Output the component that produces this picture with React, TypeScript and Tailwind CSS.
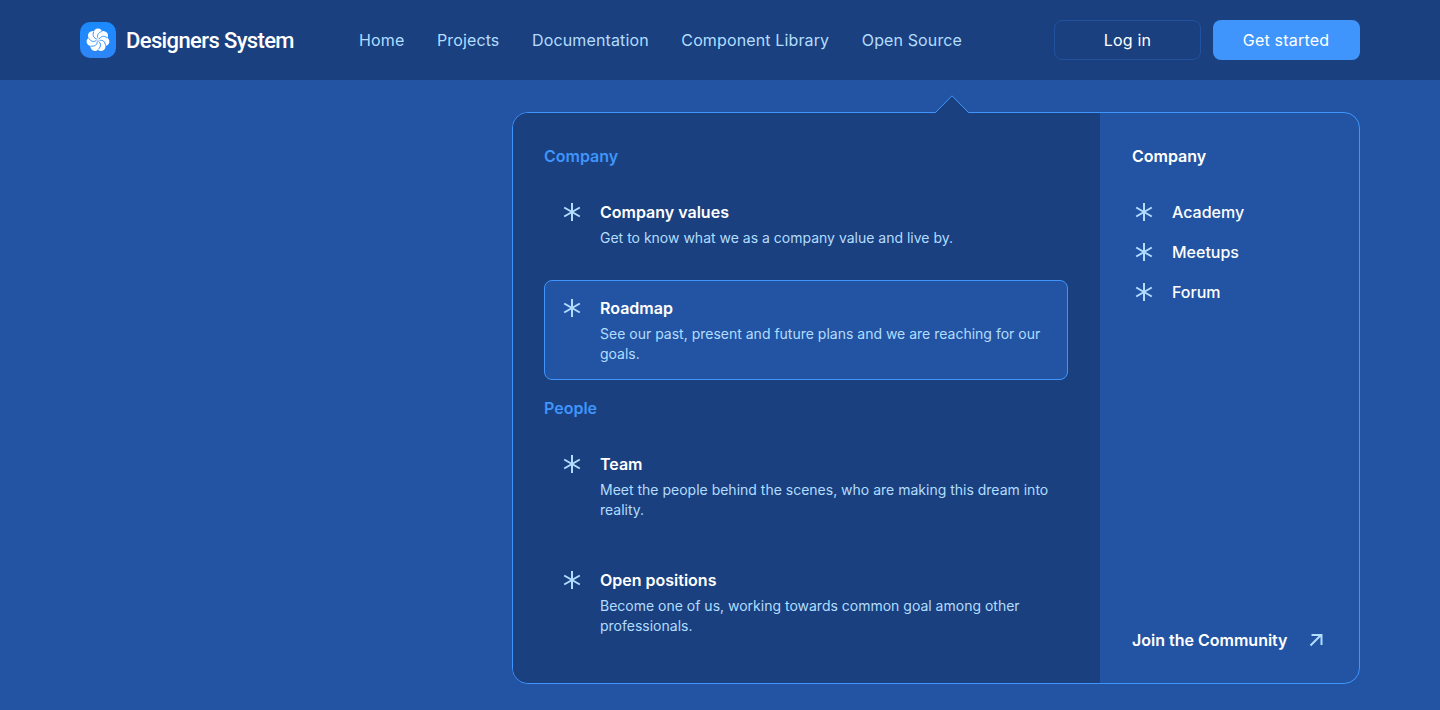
const NAV = ['Home', 'Projects', 'Documentation', 'Component Library', 'Open Source'];

const SECTIONS = [
  {
    title: 'Company',
    items: [
      { title: 'Company values', text: 'Get to know what we as a company value and live by.', active: false },
      { title: 'Roadmap', text: 'See our past, present and future plans and we are reaching for our goals.', active: true },
    ],
  },
  {
    title: 'People',
    items: [
      { title: 'Team', text: 'Meet the people behind the scenes, who are making this dream into reality.', active: false },
      { title: 'Open positions', text: 'Become one of us, working towards common goal among other professionals.', active: false },
    ],
  },
];

const LINKS = ['Academy', 'Meetups', 'Forum'];
const PETALS = [0, 51.43, 102.86, 154.29, 205.71, 257.14, 308.57];

function Asterisk() {
  return (
    <svg className="size-6 shrink-0" viewBox="0 0 24 24" fill="none" stroke="#b2ddff" strokeWidth="2">
      <path d="M12 3v18M4.2 7.5l15.6 9M4.2 16.5l15.6-9" />
    </svg>
  );
}

function Logo() {
  return (
    <svg className="size-9" viewBox="0 0 36 36">
      <defs>
        <linearGradient id="logo" x1="0" y1="0" x2="0" y2="1">
          <stop offset="0" stopColor="#1a8aff" />
          <stop offset="1" stopColor="#2d86f8" />
        </linearGradient>
      </defs>
      <rect width="36" height="36" rx="10" fill="url(#logo)" />
      {PETALS.map((a) => (
        <circle key={a} cx="18" cy="10.8" r="4.4" fill="#fff" transform={`rotate(${a} 18 18)`} />
      ))}
      <circle cx="18" cy="18" r="8" fill="#fff" />
      {PETALS.map((a) => (
        <path
          key={a}
          transform={`rotate(${a} 18 18)`}
          d="M18 16.4C16.8 13.4 17.8 10.8 21.8 9.4"
          fill="none"
          stroke="#2388fc"
          strokeWidth="0.85"
        />
      ))}
      <circle cx="18" cy="18" r="0.6" fill="#2388fc" />
    </svg>
  );
}

export default function App() {
  return (
    <div className="flex h-[710px] w-[1440px] flex-col overflow-hidden bg-[#2254a3] font-['Inter',sans-serif] text-base">
      <header className="flex h-20 shrink-0 items-center bg-[#1a407f] px-20">
        <div className="flex w-[279px] items-center gap-2.5">
          <Logo />
          <span className="mt-0.5 whitespace-nowrap font-['Roboto',sans-serif] text-[22px] font-medium leading-7 tracking-[-0.62px] text-white">
            Designers System
          </span>
        </div>
        <nav className="flex gap-[32.6px] whitespace-nowrap tracking-[0.13px] text-[#b2ddff]">
          {NAV.map((n) => (
            <a key={n}>{n}</a>
          ))}
        </nav>
        <div className="ml-auto flex gap-3 tracking-[0.2px] text-white">
          <button className="h-10 w-[147px] rounded-lg border border-[#2254a3]/90">Log in</button>
          <button className="h-10 w-[147px] rounded-lg bg-[#3f95fb] pr-px">Get started</button>
        </div>
      </header>

      <main className="flex justify-end px-20 pt-8">
        <div className="relative flex h-[572px] w-[848px] rounded-2xl border border-[#3f95fb]">
          <svg className="absolute left-[421px] top-[-18px] h-[19px] w-9" viewBox="0 0 36 19">
            <path d="M0.5 19L1.5 17.5L18 0.8L34.5 17.5L35.5 19Z" fill="#1a407f" />
            <path d="M1 17.5H1.5L18 0.8L34.5 17.5H35" fill="none" stroke="#3f95fb" />
          </svg>
          <div className="flex w-[587px] shrink-0 flex-col gap-4 rounded-l-[15px] bg-[#1a407f] px-[31px] pt-[31px]">
            {SECTIONS.map((s) => (
              <section key={s.title} className="flex flex-col gap-4">
                <h2 className="font-semibold leading-6 text-[#3f95fb]">{s.title}</h2>
                {s.items.map((it) => (
                  <div
                    key={it.title}
                    className={`flex w-[524px] gap-4 rounded-lg border p-[15px] ${
                      it.active ? 'border-[#3f95fb] bg-[#2254a3]' : 'border-transparent'
                    }`}
                  >
                    <Asterisk />
                    <div className="flex flex-col gap-1">
                      <h3 className="font-semibold leading-6 text-white">{it.title}</h3>
                      <p className="text-sm leading-5 text-[#b2ddff]">{it.text}</p>
                    </div>
                  </div>
                ))}
              </section>
            ))}
          </div>
          <aside className="flex flex-1 flex-col py-[31px] pl-8 text-white">
            <h2 className="font-semibold leading-6">Company</h2>
            <ul className="mt-8 flex flex-col gap-4">
              {LINKS.map((l) => (
                <li key={l} className="flex gap-4 font-medium leading-6">
                  <Asterisk />
                  {l}
                </li>
              ))}
            </ul>
            <a className="mt-auto flex items-center gap-4 whitespace-nowrap font-semibold leading-6">
              Join the Community
              <svg className="size-6 shrink-0" viewBox="0 0 24 24" fill="none" stroke="#b2ddff" strokeWidth="2">
                <path d="M6.5 17.5L17 7M7.5 7H17.5V17" />
              </svg>
            </a>
          </aside>
        </div>
      </main>
    </div>
  );
}
